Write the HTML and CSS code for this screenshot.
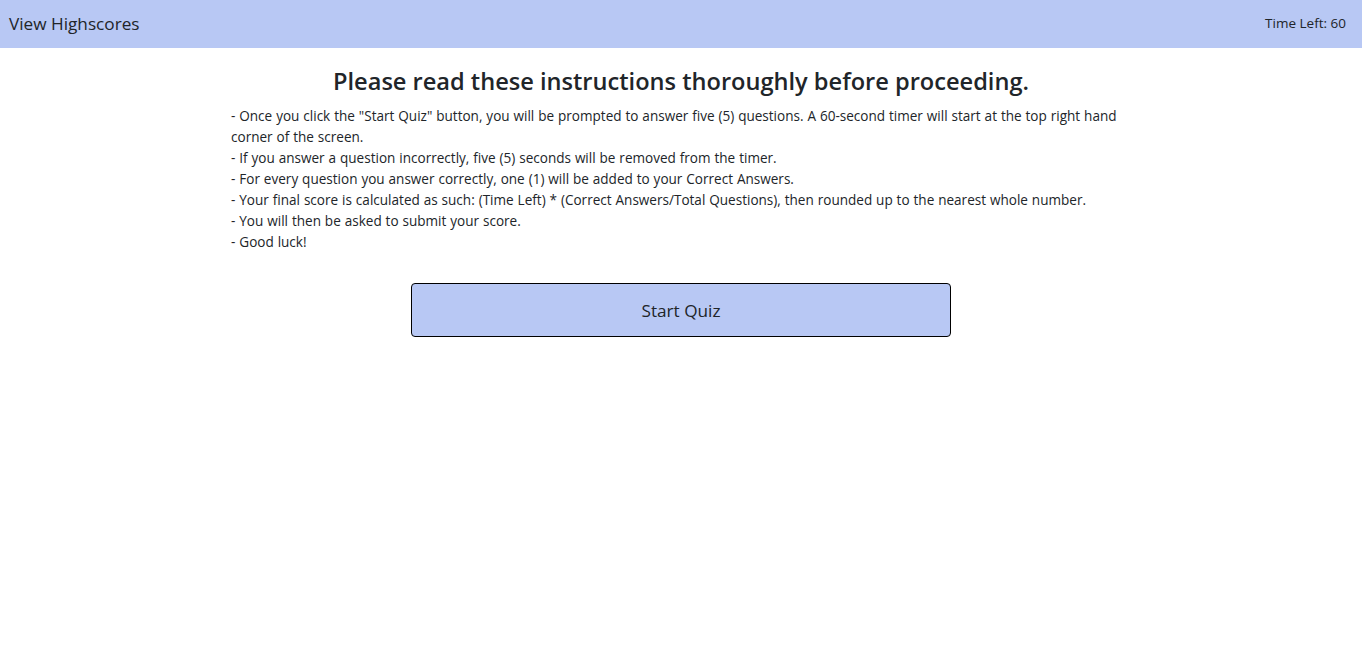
FILE: index.html
```html
<!DOCTYPE html>
<html lang="en">
<head>
<meta charset="utf-8">
<title>Quiz</title>
<link rel="stylesheet" href="styles.css">
</head>
<body>
<header class="navbar">
  <a class="nav-link" href="#">View Highscores</a>
  <span class="timer">Time Left: 60</span>
</header>
<main class="content">
  <h1 class="title">Please read these instructions thoroughly before proceeding.</h1>
  <p class="instructions">- Once you click the "Start Quiz" button, you will be prompted to answer five (5) questions. A 60-second timer will start at the top right hand corner of the screen.<br>- If you answer a question incorrectly, five (5) seconds will be removed from the timer.<br>- For every question you answer correctly, one (1) will be added to your Correct Answers.<br>- Your final score is calculated as such: (Time Left) * (Correct Answers/Total Questions), then rounded up to the nearest whole number.<br>- You will then be asked to submit your score.<br>- Good luck!</p>
  <div class="actions">
    <button class="start-btn" type="button">Start Quiz</button>
  </div>
</main>
</body>
</html>
```

FILE: styles.css
```css
html, body {
  margin: 0;
  padding: 0;
  background: #ffffff;
  color: #212529;
  font-family: "Open Sans", "Noto Sans", sans-serif;
}

.navbar {
  height: 48px;
  background: #b8c8f4;
  display: flex;
  align-items: center;
  justify-content: space-between;
  padding: 0 16px 0 9px;
  box-sizing: border-box;
}

.nav-link {
  color: #212529;
  text-decoration: none;
  font-size: 17.2px;
  position: relative;
  top: -1px;
}

.timer {
  font-size: 13.5px;
  position: relative;
  top: -1px;
}

.content {
  width: 900px;
  margin: 0 auto;
  padding-top: 16px;
}

.title {
  margin: 0 0 8px;
  text-align: center;
  font-size: 23.6px;
  font-weight: 600;
  line-height: 34px;
}

.instructions {
  margin: 0;
  font-size: 13.55px;
  line-height: 21px;
  word-spacing: 0.4px;
}

.actions {
  display: flex;
  justify-content: center;
  padding-top: 30px;
}

.start-btn {
  width: 540px;
  height: 54px;
  background: #b8c8f4;
  border: 1px solid #000000;
  border-radius: 4px;
  font-family: inherit;
  font-size: 17.2px;
  color: #212529;
  cursor: pointer;
}
```
